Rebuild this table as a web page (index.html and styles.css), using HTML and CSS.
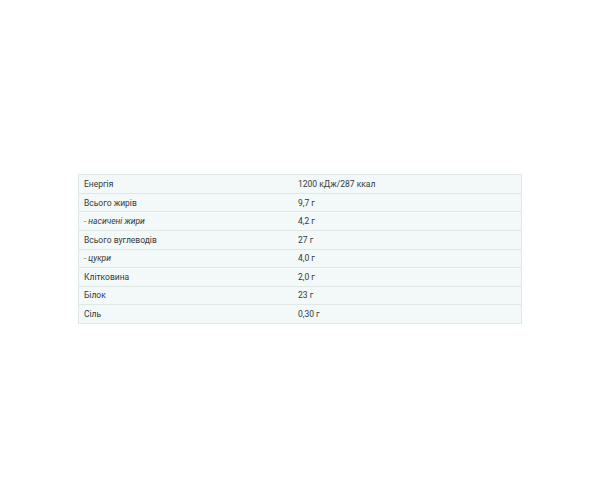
FILE: index.html
```html
<!DOCTYPE html>
<html>
<head>
<meta charset="utf-8">
<link rel="stylesheet" href="styles.css">
</head>
<body>
<div class="page">
  <table class="nutrition">
    <tbody>
      <tr><td class="label">Енергія</td><td>1200 кДж/287 ккал</td></tr>
      <tr><td class="label">Всього жирів</td><td>9,7 г</td></tr>
      <tr><td class="label"><em>- насичені жири</em></td><td>4,2 г</td></tr>
      <tr><td class="label">Всього вуглеводів</td><td>27 г</td></tr>
      <tr><td class="label"><em>- цукри</em></td><td>4,0 г</td></tr>
      <tr><td class="label">Клітковина</td><td>2,0 г</td></tr>
      <tr><td class="label">Білок</td><td>23 г</td></tr>
      <tr><td class="label">Сіль</td><td>0,30 г</td></tr>
    </tbody>
  </table>
</div>
</body>
</html>
```
FILE: styles.css
```css
html, body {
  margin: 0;
  padding: 0;
  background: #ffffff;
}
.page {
  width: 600px;
  height: 500px;
  display: flex;
  align-items: center;
  justify-content: center;
  padding-bottom: 2px;
  box-sizing: border-box;
}
.nutrition {
  width: 444px;
  border-collapse: collapse;
  border: 1px solid #e0e7e7;
  background: #f3f8f8;
  font-family: Roboto, "Noto Sans", sans-serif;
  font-size: 8.5px;
  color: #333a3d;
}
.nutrition td {
  border-top: 1px solid #e0e7e7;
  border-bottom: 1px solid #e0e7e7;
  padding: 0 5px;
  height: 17.6px;
  line-height: 10px;
  vertical-align: middle;
  text-align: left;
}
.nutrition .label {
  width: 204px;
}
.nutrition em {
  font-style: italic;
}
```
